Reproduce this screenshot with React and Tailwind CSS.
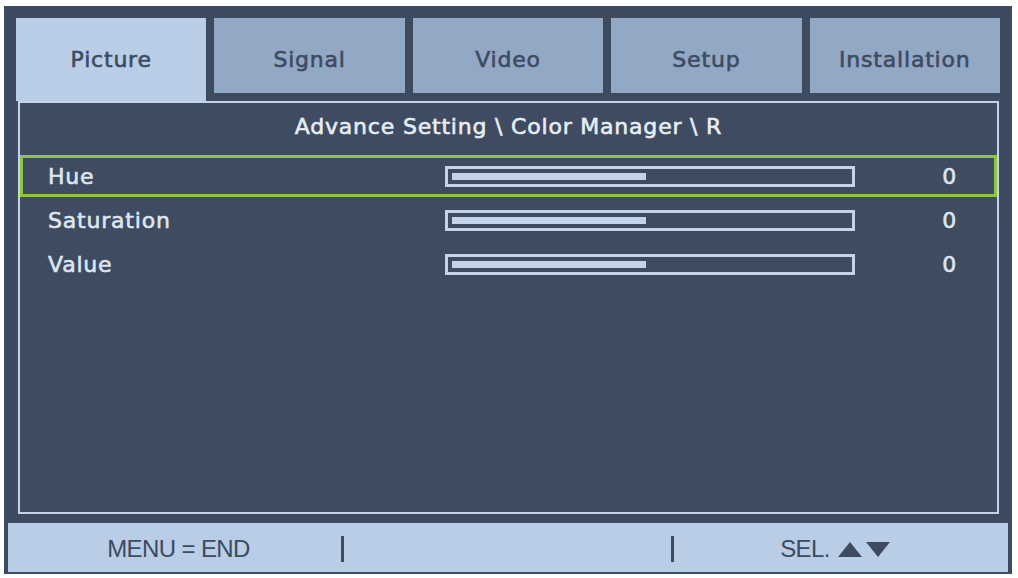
import React from 'react'

const tabs = ['Picture', 'Signal', 'Video', 'Setup', 'Installation']

const rows = [
    { label: 'Hue', value: 0, selected: true },
    { label: 'Saturation', value: 0 },
    { label: 'Value', value: 0 },
]

// medium-weight look: regular face with a thin stroke
const osd = 'text-[22px] tracking-[0.8px] [-webkit-text-stroke:0.6px_currentColor]'

function Slider() {
    return (
        <div className="w-[410px] h-[21px] border-[3px] border-[#c3d4ea] flex items-center pl-[4px]">
            <div className="w-[194px] h-[7px] bg-[#c3d4ea]" />
        </div>
    )
}

function Row({ row }) {
    return (
        <div
            className={
                row.selected
                    ? 'h-[42px] border-[3px] border-[#8ec641] flex items-center'
                    : 'h-[42px] border-[3px] border-transparent flex items-center'
            }
        >
            <div className={'w-[422px] pl-[25px] text-[#dde6f1] ' + osd}>{row.label}</div>
            <Slider />
            <div className={'flex-1 text-right pr-[37px] text-[#dde6f1] ' + osd}>{row.value}</div>
        </div>
    )
}

export default function App() {
    return (
        <div
            className="w-[1018px] h-[578px] bg-white pt-[6px] pl-[4px]"
            style={{ fontFamily: '"DejaVu Sans", Verdana, sans-serif' }}
        >
            <div className="w-[1008px] h-[568px] bg-[#3d4a5f] flex flex-col pt-[12px] pb-[2px]">
                {/* tabs */}
                <div className="grid grid-cols-5 gap-[8px] items-start px-[12px]">
                    {tabs.map((t, i) => (
                        <div
                            key={t}
                            className={
                                (i === 0 ? 'h-[83px] bg-[#b9cde7] ' : 'h-[75px] bg-[#93a8c5] ') +
                                'text-center pt-[28px] leading-[28px] text-[#3e4b61] ' +
                                osd
                            }
                        >
                            {t}
                        </div>
                    ))}
                </div>

                {/* panel */}
                <div className="mx-[14px] w-[981px] h-[413px] border-2 border-[#c3d4ea] bg-[#3e4b61] flex flex-col">
                    <div className={'h-[52px] pb-[6px] flex items-center justify-center text-[#e6edf6] ' + osd}>
                        Advance Setting \ Color Manager \ R
                    </div>
                    <div className="flex flex-col gap-[2px]">
                        {rows.map((r) => (
                            <Row key={r.label} row={r} />
                        ))}
                    </div>
                </div>

                {/* footer */}
                <div
                    className="mt-[9px] mx-[4px] h-[49px] bg-[#b9cde7] flex items-center pt-[3px] text-[#3d4a60] text-[24px] tracking-tight"
                    style={{ fontFamily: '"Liberation Sans", Arial, sans-serif' }}
                >
                    <div className="w-[333px] flex justify-center pl-[8px]">MENU = END</div>
                    <div className="w-[3px] h-[26px] bg-[#3d4a60]" />
                    <div className="w-[327px]" />
                    <div className="w-[3px] h-[26px] bg-[#3d4a60]" />
                    <div className="flex-1 flex justify-center items-center gap-[8px] pr-[12px]">
                        <span>SEL.</span>
                        <svg width="52" height="15" viewBox="0 0 52 15">
                            <polygon points="0,15 12,0 24,15" fill="#3d4a60" />
                            <polygon points="28,0 52,0 40,15" fill="#3d4a60" />
                        </svg>
                    </div>
                </div>
            </div>
        </div>
    )
}
